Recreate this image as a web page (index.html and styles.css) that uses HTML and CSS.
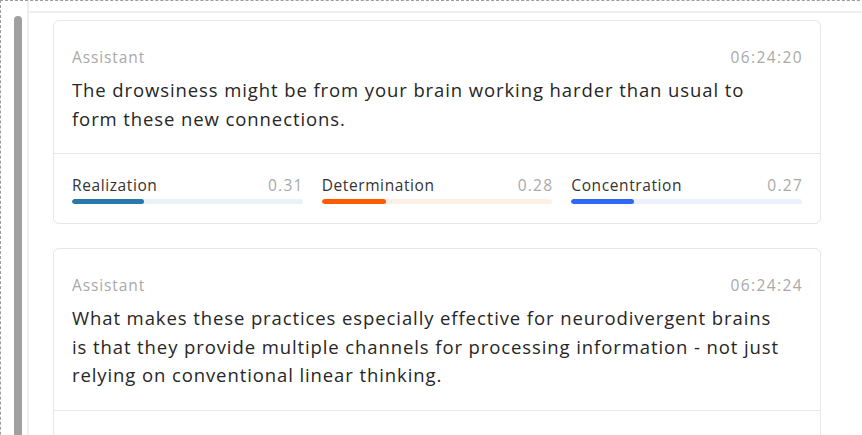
FILE: index.html
```html
<!DOCTYPE html>
<html>
<head>
<meta charset="utf-8">
<link rel="stylesheet" href="styles.css">
</head>
<body>
<div class="frame">
  <div class="rail"><div class="thumb"></div></div>
  <div class="pane">
    <div class="feed">
      <div class="card">
        <div class="head"><span class="who">Assistant</span><span class="time">06:24:20</span></div>
        <p class="msg">The drowsiness might be from your brain working harder than usual to form these new connections.</p>
        <div class="emotions">
          <div class="emo blue">
            <div class="emo-row"><span class="name">Realization</span><span class="val">0.31</span></div>
            <div class="track"><div class="fill" style="width:31%"></div></div>
          </div>
          <div class="emo orange">
            <div class="emo-row"><span class="name">Determination</span><span class="val">0.28</span></div>
            <div class="track"><div class="fill" style="width:28%"></div></div>
          </div>
          <div class="emo azure">
            <div class="emo-row"><span class="name">Concentration</span><span class="val">0.27</span></div>
            <div class="track"><div class="fill" style="width:27%"></div></div>
          </div>
        </div>
      </div>
      <div class="card">
        <div class="head"><span class="who">Assistant</span><span class="time">06:24:24</span></div>
        <p class="msg">What makes these practices especially effective for neurodivergent brains is that they provide multiple channels for processing information - not just relying on conventional linear thinking.</p>
        <div class="emotions">
          <div class="emo blue">
            <div class="emo-row"><span class="name">Realization</span><span class="val">0.30</span></div>
            <div class="track"><div class="fill" style="width:30%"></div></div>
          </div>
        </div>
      </div>
    </div>
  </div>
</div>
</body>
</html>
```

FILE: styles.css
```css
html, body {
  margin: 0;
  padding: 0;
  background: #ffffff;
  overflow: hidden;
  height: 100%;
}
body {
  font-family: "Open Sans", Lato, sans-serif;
  color: #2b2b2b;
}
.frame {
  display: flex;
  width: 900px;
  height: 500px;
  border-top: 1px dashed #9c9c9c;
  border-left: 1px dashed #9c9c9c;
  box-sizing: border-box;
}
.rail {
  width: 28px;
  flex: none;
  padding-top: 15px;
  padding-left: 13px;
  box-sizing: border-box;
  border-right: 2px solid #efefef;
}
.thumb {
  width: 8px;
  height: 600px;
  background: #a0a0a0;
  border-radius: 4px 4px 0 0;
}
.pane {
  flex: 1;
  margin-top: 10px;
  border-top: 2px solid #efefef;
  padding: 7px 0 0 24px;
}
.feed {
  width: 768px;
  display: flex;
  flex-direction: column;
  gap: 24px;
}
.card {
  border: 1px solid #e6e6e6;
  border-radius: 6px;
  background: #fff;
}
.head {
  display: flex;
  justify-content: space-between;
  padding: 26px 18px 0 18px;
  font-size: 15.5px;
  letter-spacing: 0.9px;
  line-height: 20px;
  color: #a9a9a9;
}
.time { letter-spacing: 1.4px; margin-right: -1px; }
.msg {
  margin: 9px 0 0 0;
  padding: 0 18px 20px 18px;
  max-width: 712px;
  font-size: 18.5px;
  letter-spacing: 0.9px;
  line-height: 28.5px;
  color: #262626;
}
.emotions {
  border-top: 1px solid #e6e6e6;
  display: grid;
  grid-template-columns: repeat(3, 1fr);
  column-gap: 19px;
  padding: 21px 18px 19px 18px;
}
.emo-row {
  display: flex;
  justify-content: space-between;
  font-size: 15.5px;
  letter-spacing: 0.6px;
  line-height: 20px;
}
.name { color: #333; }
.val { color: #a9a9a9; letter-spacing: 1.25px; margin-right: -1px; }
.track {
  margin-top: 4px;
  height: 5px;
  border-radius: 3px;
  overflow: hidden;
}
.fill { height: 100%; border-radius: 3px; }
.blue .track { background: #e9f2f7; }
.blue .fill { background: #2a78a9; }
.orange .track { background: #fdeee6; }
.orange .fill { background: #ff5c00; }
.azure .track { background: #ebf0fe; }
.azure .fill { background: #3068f6; }
```
